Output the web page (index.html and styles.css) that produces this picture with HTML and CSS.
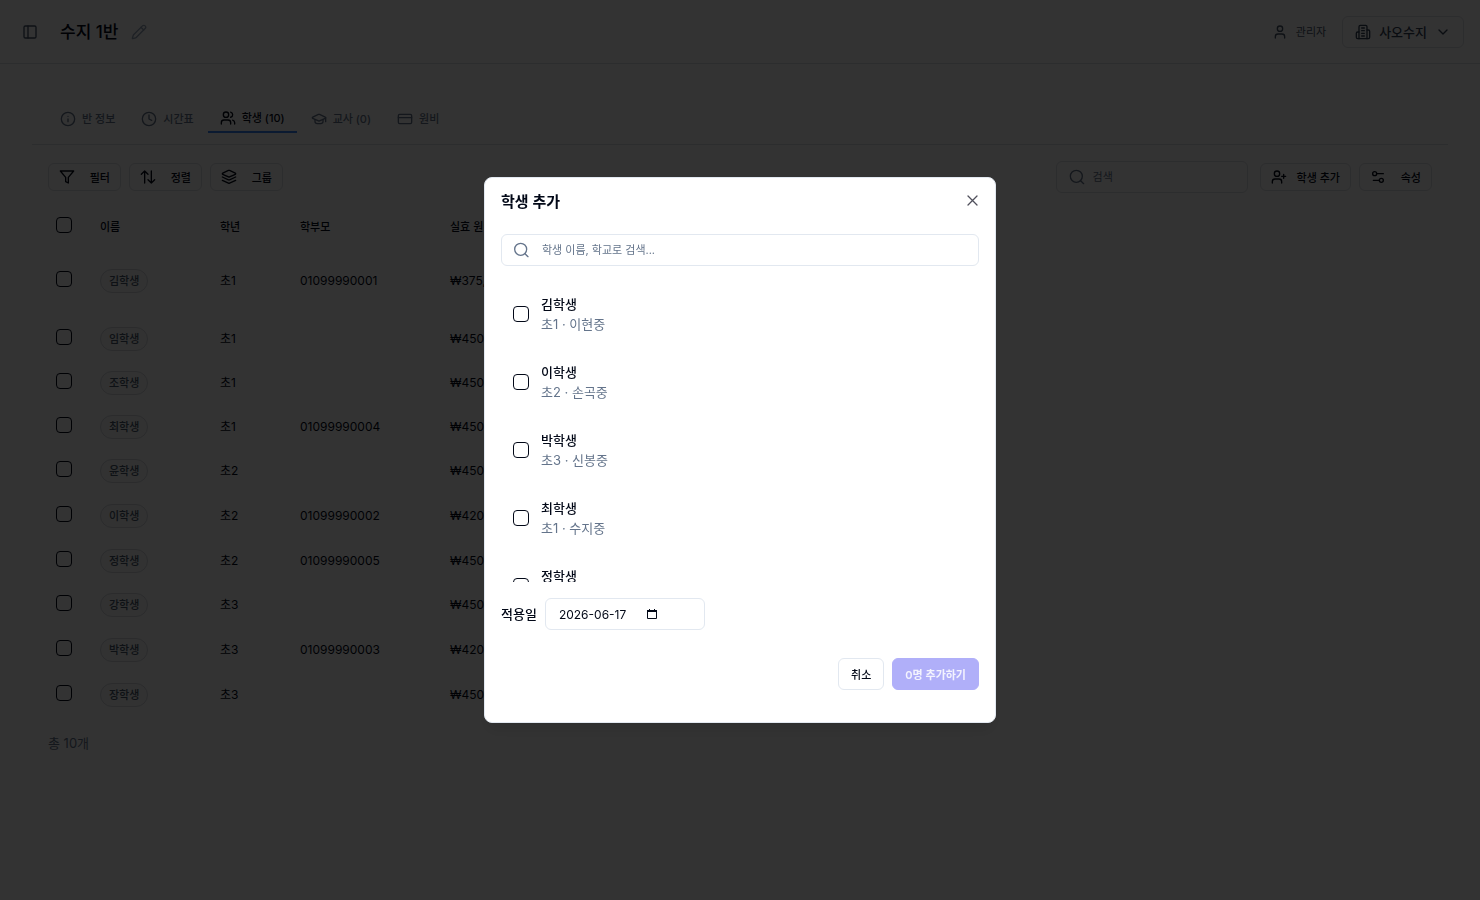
FILE: index.html
```html
<!DOCTYPE html>
<html lang="ko">
<head>
    <meta charset="UTF-8">
    <meta name="viewport" content="width=device-width, initial-scale=1.0">
    <title>수지 1반</title>
    <link rel="stylesheet" href="styles.css">
</head>
<body>

<header class="topbar">
    <button class="icon-button" aria-label="사이드바">
        <svg class="icon" viewBox="0 0 24 24"><rect x="3" y="3" width="18" height="18" rx="2"/><path d="M9 3v18"/></svg>
    </button>
    <h1 class="page-title">수지 1반</h1>
    <button class="icon-button edit-button" aria-label="이름 수정">
        <svg class="icon" viewBox="0 0 24 24"><path d="M21.174 6.812a1 1 0 0 0-3.986-3.987L3.842 16.174a2 2 0 0 0-.5.83l-1.321 4.352a.5.5 0 0 0 .623.622l4.353-1.32a2 2 0 0 0 .83-.497z"/><path d="m15 5 4 4"/></svg>
    </button>
    <div class="account">
        <span class="user">
            <svg class="icon" viewBox="0 0 24 24"><path d="M19 21v-2a4 4 0 0 0-4-4H9a4 4 0 0 0-4 4v2"/><circle cx="12" cy="7" r="4"/></svg>
            관리자
        </span>
        <button class="branch-button">
            <svg class="icon" viewBox="0 0 24 24"><path d="M6 22V4a2 2 0 0 1 2-2h8a2 2 0 0 1 2 2v18Z"/><path d="M6 12H4a2 2 0 0 0-2 2v6a2 2 0 0 0 2 2h2"/><path d="M18 9h2a2 2 0 0 1 2 2v9a2 2 0 0 1-2 2h-2"/><path d="M10 6h4M10 10h4M10 14h4M10 18h4"/></svg>
            사오수지
            <svg class="icon" viewBox="0 0 24 24"><path d="m6 9 6 6 6-6"/></svg>
        </button>
    </div>
</header>

<main class="content">
    <nav class="tabs">
        <a class="tab" href="#info">
            <svg class="icon" viewBox="0 0 24 24"><circle cx="12" cy="12" r="10"/><path d="M12 16v-4M12 8h.01"/></svg>
            반 정보
        </a>
        <a class="tab" href="#schedule">
            <svg class="icon" viewBox="0 0 24 24"><circle cx="12" cy="12" r="10"/><path d="M12 6v6l4 2"/></svg>
            시간표
        </a>
        <a class="tab active" href="#students">
            <svg class="icon" viewBox="0 0 24 24"><path d="M16 21v-2a4 4 0 0 0-4-4H6a4 4 0 0 0-4 4v2"/><circle cx="9" cy="7" r="4"/><path d="M22 21v-2a4 4 0 0 0-3-3.87M16 3.13a4 4 0 0 1 0 7.75"/></svg>
            학생 (10)
        </a>
        <a class="tab" href="#teachers">
            <svg class="icon" viewBox="0 0 24 24"><path d="M21.42 10.922a1 1 0 0 0-.019-1.838L12.83 5.18a2 2 0 0 0-1.66 0L2.6 9.08a1 1 0 0 0 0 1.832l8.57 3.908a2 2 0 0 0 1.66 0z"/><path d="M22 10v6"/><path d="M6 12.5V16a6 3 0 0 0 12 0v-3.5"/></svg>
            교사 (0)
        </a>
        <a class="tab" href="#fee">
            <svg class="icon" viewBox="0 0 24 24"><rect x="2" y="5" width="20" height="14" rx="2"/><path d="M2 10h20"/></svg>
            원비
        </a>
    </nav>

    <div class="toolbar">
        <button class="tool-button">
            <svg class="icon" viewBox="0 0 24 24"><path d="M22 3H2l8 9.46V19l4 2v-8.54z"/></svg>
            필터
        </button>
        <button class="tool-button">
            <svg class="icon" viewBox="0 0 24 24"><path d="m2 8 5-5 5 5M7 3v18"/><path d="m22 16-5 5-5-5M17 21V3"/></svg>
            정렬
        </button>
        <button class="tool-button">
            <svg class="icon" viewBox="0 0 24 24"><path d="m12.83 2.18a2 2 0 0 0-1.66 0L2.6 6.08a1 1 0 0 0 0 1.83l8.58 3.91a2 2 0 0 0 1.66 0l8.58-3.9a1 1 0 0 0 0-1.83Z"/><path d="m22 12-9.17 4.16a2 2 0 0 1-1.66 0L2 12"/><path d="m22 17-9.17 4.16a2 2 0 0 1-1.66 0L2 17"/></svg>
            그룹
        </button>
        <div class="search-box table-search">
            <svg class="icon" viewBox="0 0 24 24"><circle cx="11" cy="11" r="9"/><path d="m22 22-4.5-4.5"/></svg>
            <input type="text" placeholder="검색" aria-label="검색">
        </div>
        <button class="tool-button">
            <svg class="icon" viewBox="0 0 24 24"><path d="M16 21v-2a4 4 0 0 0-4-4H6a4 4 0 0 0-4 4v2"/><circle cx="9" cy="7" r="4"/><path d="M19 8v6M22 11h-6"/></svg>
            학생 추가
        </button>
        <button class="tool-button">
            <svg class="icon" viewBox="0 0 24 24"><path d="M20 7h-9M14 17H5"/><circle cx="17" cy="17" r="3"/><circle cx="7" cy="7" r="3"/></svg>
            속성
        </button>
    </div>

    <table class="student-table">
        <thead>
            <tr>
                <th class="col-check"><input type="checkbox" class="checkbox" aria-label="전체 선택"></th>
                <th class="col-name">이름</th>
                <th class="col-grade">학년</th>
                <th class="col-parent">학부모</th>
                <th class="col-fee">실효 원비</th>
            </tr>
        </thead>
        <tbody>
            <tr class="row-tall">
                <td><input type="checkbox" class="checkbox" aria-label="김학생"></td>
                <td><span class="badge">김학생</span></td><td>초1</td><td>01099990001</td><td>₩375,000</td>
            </tr>
            <tr>
                <td><input type="checkbox" class="checkbox" aria-label="임학생"></td>
                <td><span class="badge">임학생</span></td><td>초1</td><td></td><td>₩450,000</td>
            </tr>
            <tr>
                <td><input type="checkbox" class="checkbox" aria-label="조학생"></td>
                <td><span class="badge">조학생</span></td><td>초1</td><td></td><td>₩450,000</td>
            </tr>
            <tr>
                <td><input type="checkbox" class="checkbox" aria-label="최학생"></td>
                <td><span class="badge">최학생</span></td><td>초1</td><td>01099990004</td><td>₩450,000</td>
            </tr>
            <tr>
                <td><input type="checkbox" class="checkbox" aria-label="윤학생"></td>
                <td><span class="badge">윤학생</span></td><td>초2</td><td></td><td>₩450,000</td>
            </tr>
            <tr class="row-phone">
                <td><input type="checkbox" class="checkbox" aria-label="이학생"></td>
                <td><span class="badge">이학생</span></td><td>초2</td><td>01099990002</td><td>₩420,000</td>
            </tr>
            <tr class="row-phone">
                <td><input type="checkbox" class="checkbox" aria-label="정학생"></td>
                <td><span class="badge">정학생</span></td><td>초2</td><td>01099990005</td><td>₩450,000</td>
            </tr>
            <tr>
                <td><input type="checkbox" class="checkbox" aria-label="강학생"></td>
                <td><span class="badge">강학생</span></td><td>초3</td><td></td><td>₩450,000</td>
            </tr>
            <tr class="row-phone">
                <td><input type="checkbox" class="checkbox" aria-label="박학생"></td>
                <td><span class="badge">박학생</span></td><td>초3</td><td>01099990003</td><td>₩420,000</td>
            </tr>
            <tr class="row-phone">
                <td><input type="checkbox" class="checkbox" aria-label="장학생"></td>
                <td><span class="badge">장학생</span></td><td>초3</td><td></td><td>₩450,000</td>
            </tr>
        </tbody>
    </table>
    <p class="total">총 10개</p>
</main>

<div class="overlay">
    <div class="modal" role="dialog" aria-labelledby="modal-title">
        <div class="modal-header">
            <h2 id="modal-title">학생 추가</h2>
            <button class="close-button" aria-label="닫기">
                <svg class="icon" viewBox="0 0 16 16"><path d="m3 2 9 9M12 2l-9 9"/></svg>
            </button>
        </div>
        <div class="search-box">
            <svg class="icon" viewBox="0 0 24 24"><circle cx="10" cy="11" r="9"/><path d="m21 22-4.5-4.5"/></svg>
            <input type="text" placeholder="학생 이름, 학교로 검색..." aria-label="학생 검색">
        </div>
        <div class="candidates">
            <label class="candidate">
                <input type="checkbox" class="checkbox">
                <span class="candidate-text"><span class="candidate-name">김학생</span><span class="candidate-school">초1 · 이현중</span></span>
            </label>
            <label class="candidate">
                <input type="checkbox" class="checkbox">
                <span class="candidate-text"><span class="candidate-name">이학생</span><span class="candidate-school">초2 · 손곡중</span></span>
            </label>
            <label class="candidate">
                <input type="checkbox" class="checkbox">
                <span class="candidate-text"><span class="candidate-name">박학생</span><span class="candidate-school">초3 · 신봉중</span></span>
            </label>
            <label class="candidate">
                <input type="checkbox" class="checkbox">
                <span class="candidate-text"><span class="candidate-name">최학생</span><span class="candidate-school">초1 · 수지중</span></span>
            </label>
            <label class="candidate">
                <input type="checkbox" class="checkbox">
                <span class="candidate-text"><span class="candidate-name">정학생</span></span>
            </label>
        </div>
        <div class="date-row">
            <label for="start-date">적용일</label>
            <div class="date-box">
                <input type="text" id="start-date" class="date-input" value="2026-06-17">
                <button class="date-button" aria-label="날짜 선택">
                    <svg class="calendar" viewBox="0 0 12 12"><path d="M1.5 2.5h9v8h-9z"/><path d="M1 3h10" stroke-width="2"/><path d="M3.5 1v2M8.5 1v2"/></svg>
                </button>
            </div>
        </div>
        <div class="modal-footer">
            <button class="cancel-button">취소</button>
            <button class="submit-button" disabled>0명 추가하기</button>
        </div>
    </div>
</div>

</body>
</html>
```
FILE: styles.css
```css
* {
    box-sizing: border-box;
}
body {
    margin: 0;
    min-height: 100vh;
    font-family: Inter, "Noto Sans CJK KR", sans-serif;
    font-size: 11px;
    line-height: 16px;
    color: #020817;
    background: #fff;
}
button, input {
    font-family: inherit;
    font-size: 11px;
    color: inherit;
}
button {
    display: flex;
    align-items: center;
    padding: 0;
    background: none;
    border: none;
    cursor: pointer;
}
.icon {
    flex: none;
    width: 16px;
    height: 16px;
    fill: none;
    stroke: currentColor;
    stroke-width: 2;
    stroke-linecap: round;
    stroke-linejoin: round;
}

/* header */
.topbar {
    display: flex;
    align-items: center;
    height: 64px;
    padding: 0 16px 0 22px;
    border-bottom: 1px solid #dcdfe4;
}
.icon-button {
    color: #475569;
}
.page-title {
    margin: 0 12px 0 22px;
    font-size: 17px;
    font-weight: 500;
    line-height: 24px;
}
.edit-button {
    color: #94a3b8;
}
.account {
    display: flex;
    align-items: center;
    gap: 16px;
    margin-left: auto;
    color: #475569;
}
.user {
    display: flex;
    align-items: center;
    gap: 8px;
}
.branch-button {
    gap: 8px;
    height: 32px;
    padding: 0 12px;
    font-size: 13px;
    font-weight: 500;
    color: #334155;
    border: 1px solid #dcdfe4;
    border-radius: 6px;
}

/* tabs */
.content {
    padding: 41px 32px 0;
}
.tabs {
    display: flex;
    gap: 2px;
    padding: 0 16px 11px;
    border-bottom: 1px solid #dcdfe4;
}
.tab {
    display: flex;
    align-items: center;
    gap: 6px;
    height: 28px;
    padding: 0 12px;
    font-weight: 500;
    color: #64748b;
    text-decoration: none;
}
.tab.active {
    color: #020817;
    border-bottom: 2px solid #3b82f6;
}

/* toolbar */
.toolbar {
    display: flex;
    align-items: center;
    gap: 8px;
    padding: 16px;
}
.tool-button {
    justify-content: space-between;
    gap: 10px;
    min-width: 73px;
    height: 28px;
    padding: 0 10px;
    font-weight: 500;
    border: 1px solid #dcdfe4;
    border-radius: 6px;
}
.search-box {
    display: flex;
    align-items: center;
    gap: 12px;
    height: 32px;
    padding: 0 12px;
    color: #64748b;
    border: 1px solid #e2e8f0;
    border-radius: 6px;
}
.search-box input {
    flex: 1;
    min-width: 0;
    padding: 0;
    background: none;
    border: none;
    outline: none;
}
.search-box input::placeholder {
    color: #64748b;
}
.table-search {
    gap: 8px;
    width: 192px;
    margin: 0 4px 0 auto;
    border-color: #dcdfe4;
}

/* student table */
.student-table {
    width: 100%;
    padding: 0 16px;
    table-layout: fixed;
    border-spacing: 0;
}
.student-table th {
    height: 36px;
    padding: 0 8px;
    font-weight: 500;
    text-align: left;
}
.student-table td {
    height: 44px;
    padding: 0 8px;
    font-size: 12px;
}
.student-table .row-phone td {
    height: 45px;
}
.student-table .row-tall td {
    height: 72px;
}
.col-check {
    width: 44px;
}
.col-name {
    width: 120px;
}
.col-grade {
    width: 80px;
}
.col-parent {
    width: 150px;
}
.checkbox {
    display: block;
    flex: none;
    appearance: none;
    width: 16px;
    height: 16px;
    margin: 0;
    border: 1px solid #020817;
    border-radius: 4px;
}
.checkbox:checked {
    background: #020817;
}
.student-table .checkbox {
    margin-bottom: 4px;
}
.badge {
    display: inline-block;
    padding: 3px 8px;
    font-size: 11px;
    font-weight: 500;
    color: #475569;
    background: #f8f9fa;
    border: 1px solid #d4d7dc;
    border-radius: 12px;
}
.total {
    margin: 16px 16px 0;
    font-size: 13px;
    line-height: 20px;
    color: #64748b;
}

/* add student dialog */
.overlay {
    position: fixed;
    inset: 0;
    display: flex;
    align-items: center;
    justify-content: center;
    background: rgba(0, 0, 0, 0.8);
}
.modal {
    width: 100%;
    max-width: 512px;
    padding: 16px 16px 32px;
    background: #fff;
    border: 1px solid #e2e8f0;
    border-radius: 8px;
    box-shadow: 0 10px 15px -3px rgba(0, 0, 0, 0.1);
}
.modal-header {
    display: flex;
    align-items: center;
    justify-content: space-between;
    height: 16px;
    margin-bottom: 24px;
}
.modal-header h2 {
    margin: 0;
    font-size: 15px;
    font-weight: 600;
    line-height: 16px;
}
.close-button {
    margin-right: -2px;
    color: #50505c;
}
.close-button .icon {
    stroke-width: 1.3;
}
.candidates {
    display: flex;
    flex-direction: column;
    gap: 4px;
    height: 300px;
    margin: 16px 0;
    overflow-y: auto;
    scrollbar-width: none;
}
.candidate {
    display: flex;
    flex: none;
    align-items: center;
    gap: 12px;
    height: 64px;
    padding: 0 12px;
}
.candidate-text {
    display: flex;
    flex-direction: column;
    height: 40px;
    font-size: 13px;
    line-height: 20px;
}
.candidate-name {
    font-weight: 500;
}
.candidate-school {
    color: #64748b;
}
.date-row {
    display: flex;
    align-items: center;
    gap: 8px;
    font-size: 13px;
    font-weight: 500;
}
.date-box {
    display: flex;
    align-items: center;
    gap: 11px;
    width: 160px;
    height: 32px;
    padding: 0 13px;
    border: 1px solid #e2e8f0;
    border-radius: 6px;
}
.date-input {
    width: 76px;
    padding: 0;
    font-size: 12px;
    background: none;
    border: none;
    outline: none;
}
.calendar {
    width: 12px;
    height: 12px;
    fill: none;
    stroke: #020817;
}
.modal-footer {
    display: flex;
    justify-content: flex-end;
    gap: 8px;
    margin-top: 28px;
}
.cancel-button, .submit-button {
    height: 32px;
    padding: 0 12px;
    font-weight: 500;
    border: 1px solid #e2e8f0;
    border-radius: 6px;
}
.submit-button {
    font-weight: 600;
    color: #f3f3fe;
    background: #b0aff9;
    border-color: #b0aff9;
}
```
